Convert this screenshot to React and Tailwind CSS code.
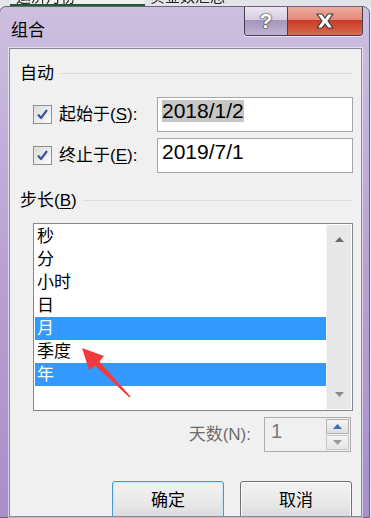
import React from "react";

const font = "font-['Liberation_Sans','Noto_Sans_CJK_SC',sans-serif]";

const items = [
  { label: "秒" },
  { label: "分" },
  { label: "小时" },
  { label: "日" },
  { label: "月", selected: true },
  { label: "季度" },
  { label: "年", selected: true },
];

const CheckBox = () => (
  <div className="w-[19px] h-[19px] shrink-0 border border-[#8e8f8f] bg-gradient-to-br from-[#dcdcdc] to-[#fbfbfb] p-[2px] flex items-center justify-center">
    <svg width="13" height="13" viewBox="0 0 13 13">
      <path d="M2 6.5 L5 10 L11 2" fill="none" stroke="#3b5998" strokeWidth="2.2" strokeLinejoin="round" />
    </svg>
  </div>
);

const GroupHeader = ({ children, className }) => (
  <div className={`h-[20px] shrink-0 flex items-center gap-[6px] ${className}`}>
    <span className="text-[17px] leading-none text-black">{children}</span>
    <div className="flex-1 h-px bg-[#d5dfe5]" />
  </div>
);

const Tri = ({ up, color }) => (
  <svg width="9" height="5" viewBox="0 0 9 5">
    <path d={up ? "M0 5 L4.5 0 L9 5 Z" : "M0 0 L4.5 5 L9 0 Z"} fill={color} />
  </svg>
);

export default function App() {
  return (
    <div className={`relative w-[371px] h-[518px] overflow-hidden bg-[#e9ecef] ${font}`}>
      {/* excel sheet peeking behind the dialog */}
      <div className="h-[6px] overflow-hidden flex items-end bg-[#e2e5e8]">
        <div className="ml-[10px] w-[135px] h-[6px] border-b-[2px] border-[#1e5a32] bg-[#eef0f0] overflow-hidden">
          <div className="mt-[-11px] ml-[6px] text-[15px] leading-none text-[#222] blur-[0.4px]">运济月份</div>
        </div>
        <div className="ml-[3px] w-[150px] h-[6px] overflow-hidden">
          <div className="mt-[-11px] ml-[2px] text-[15px] leading-none text-[#222] blur-[0.4px]">实金数汇总</div>
        </div>
      </div>

      {/* window frame */}
      <div className="ml-[-1px] w-[371px] h-[512px] rounded-t-[7px] border border-[#6f607f] bg-gradient-to-b from-[#cdbfe0] via-[#b9a2d2] to-[#a98ec8] pl-[9px] pr-[7px] flex flex-col">
        {/* title bar */}
        <div className="h-[41px] shrink-0 flex items-start justify-between">
          <span className="mt-[15px] ml-[2px] text-[17px] leading-none text-black">组合</span>
          <div className="flex mr-[-1px] rounded-b-[4px] border border-t-0 border-[#463d55] overflow-hidden shadow-[0_1px_0_rgba(255,255,255,0.5)]">
            <div className="w-[43px] h-[28px] flex flex-col relative border-r border-[#463d55]">
              <div className="h-[13px] bg-gradient-to-b from-[#ece6f2] to-[#d6cce0]" />
              <div className="flex-1 bg-gradient-to-b from-[#a595ba] to-[#c0b2d0]" />
              <div className="absolute inset-0 flex items-center justify-center text-[21px] font-bold text-white [text-shadow:0_0_1px_#333,0_0_1px_#333,0_0_2px_#555]">?</div>
            </div>
            <div className="w-[74px] h-[28px] flex flex-col relative">
              <div className="h-[13px] bg-gradient-to-b from-[#eeaba0] to-[#e2887a]" />
              <div className="flex-1 bg-gradient-to-b from-[#c8391f] to-[#d86a52]" />
              <div className="absolute inset-0 flex items-center justify-center">
                <svg width="22" height="18" viewBox="0 0 22 18">
                  <path d="M3 2 L8 2 L11 6 L14 2 L19 2 L14 9 L19 16 L14 16 L11 12 L8 16 L3 16 L8 9 Z" fill="#fff" stroke="#3a3a3a" strokeWidth="1.2" strokeLinejoin="round" />
                </svg>
              </div>
            </div>
          </div>
        </div>

        {/* client area */}
        <div className="flex-1 min-h-0 overflow-hidden bg-[#f0f0f0] border border-[#8c8898] shadow-[0_0_0_1px_rgba(255,255,255,0.55)] pl-[10px] pr-[8px] flex flex-col">
          <GroupHeader className="mt-[14px]">自动</GroupHeader>

          <div className="mt-[14px] h-[35px] shrink-0 flex items-center">
            <div className="w-[137px] flex items-center pl-[13px] gap-[7px]">
              <CheckBox />
              <span className="text-[17px] leading-none text-black">
                起始于(<span className="underline underline-offset-2">S</span>):
              </span>
            </div>
            <div className="w-[196px] h-[35px] border border-[#a5a5a5] bg-white pl-[4px] pt-[2px]">
              <span className="inline-block bg-[#c6c6c6] text-[21px] leading-[22px] h-[22px] text-black">2018/1/2</span>
            </div>
          </div>

          <div className="mt-[6px] h-[35px] shrink-0 flex items-center">
            <div className="w-[137px] flex items-center pl-[13px] gap-[7px]">
              <CheckBox />
              <span className="text-[17px] leading-none text-black">
                终止于(<span className="underline underline-offset-2">E</span>):
              </span>
            </div>
            <div className="w-[196px] h-[35px] border border-[#a5a5a5] bg-white pl-[4px] pt-[2px]">
              <span className="inline-block text-[21px] leading-[22px] h-[22px] text-black">2019/7/1</span>
            </div>
          </div>

          <GroupHeader className="mt-[17px]">
            步长(<span className="underline underline-offset-2">B</span>)
          </GroupHeader>

          {/* list box */}
          <div className="mt-[13px] ml-[13px] w-[320px] h-[188px] shrink-0 border border-[#828790] bg-white p-[1px] flex">
            <div className="flex-1 flex flex-col">
              {items.map((it) => (
                <div
                  key={it.label}
                  className={`h-[23px] pl-[2px] flex items-center text-[17px] leading-none ${it.selected ? "bg-[#3399ff] text-white" : "text-black"}`}
                >
                  {it.label}
                </div>
              ))}
            </div>
            <div className="w-[25px] bg-[#e8e8e8] border-l border-[#f4f4f4] flex flex-col items-center justify-between py-[12px]">
              <Tri up color="#6b6b6b" />
              <Tri color="#8a8a8a" />
            </div>
          </div>

          {/* days spin */}
          <div className="mt-[6px] shrink-0 flex items-center justify-end pr-[2px] gap-[13px]">
            <span className="text-[17px] leading-none text-[#6d6d6d]">天数(N):</span>
            <div className="w-[87px] h-[35px] border border-[#adadad] bg-[#f0f0f0] flex p-[1px]">
              <span className="flex-1 pl-[5px] pt-[2px] text-[20px] leading-none text-[#7a7a7a]">1</span>
              <div className="w-[23px] flex flex-col gap-[1px]">
                <div className="flex-1 border border-[#b5b5b5] bg-gradient-to-b from-[#f4f4f4] to-[#dedede] flex items-center justify-center">
                  <Tri up color="#3c6fb4" />
                </div>
                <div className="flex-1 border border-[#c8c8c8] bg-gradient-to-b from-[#f4f4f4] to-[#e4e4e4] flex items-center justify-center">
                  <Tri color="#9a9a9a" />
                </div>
              </div>
            </div>
          </div>

          {/* buttons */}
          <div className="mt-[29px] shrink-0 flex justify-end gap-[16px] pr-[1px]">
            <button className="w-[112px] h-[42px] rounded-[3px] border border-[#3c9fd8] shadow-[inset_0_0_0_1px_#c6e8f8] bg-gradient-to-b from-[#f2f2f2] via-[#e9e9e9] to-[#d6d6d6] flex items-center justify-center pb-[3px] text-[17px] leading-none text-black">
              确定
            </button>
            <button className="w-[112px] h-[42px] rounded-[3px] border border-[#707070] shadow-[inset_0_0_0_1px_#fcfcfc] bg-gradient-to-b from-[#f2f2f2] via-[#e9e9e9] to-[#d6d6d6] flex items-center justify-center pb-[3px] text-[17px] leading-none text-black">
              取消
            </button>
          </div>
        </div>
      </div>

      {/* red annotation arrow */}
      <svg className="absolute left-0 top-0 pointer-events-none" width="371" height="518">
        <polygon
          points="82,348 104,356 99.5,361.5 130.5,396.5 129.5,397.5 95.3,365.8 89,370"
          fill="#f23b3e"
        />
      </svg>
    </div>
  );
}
